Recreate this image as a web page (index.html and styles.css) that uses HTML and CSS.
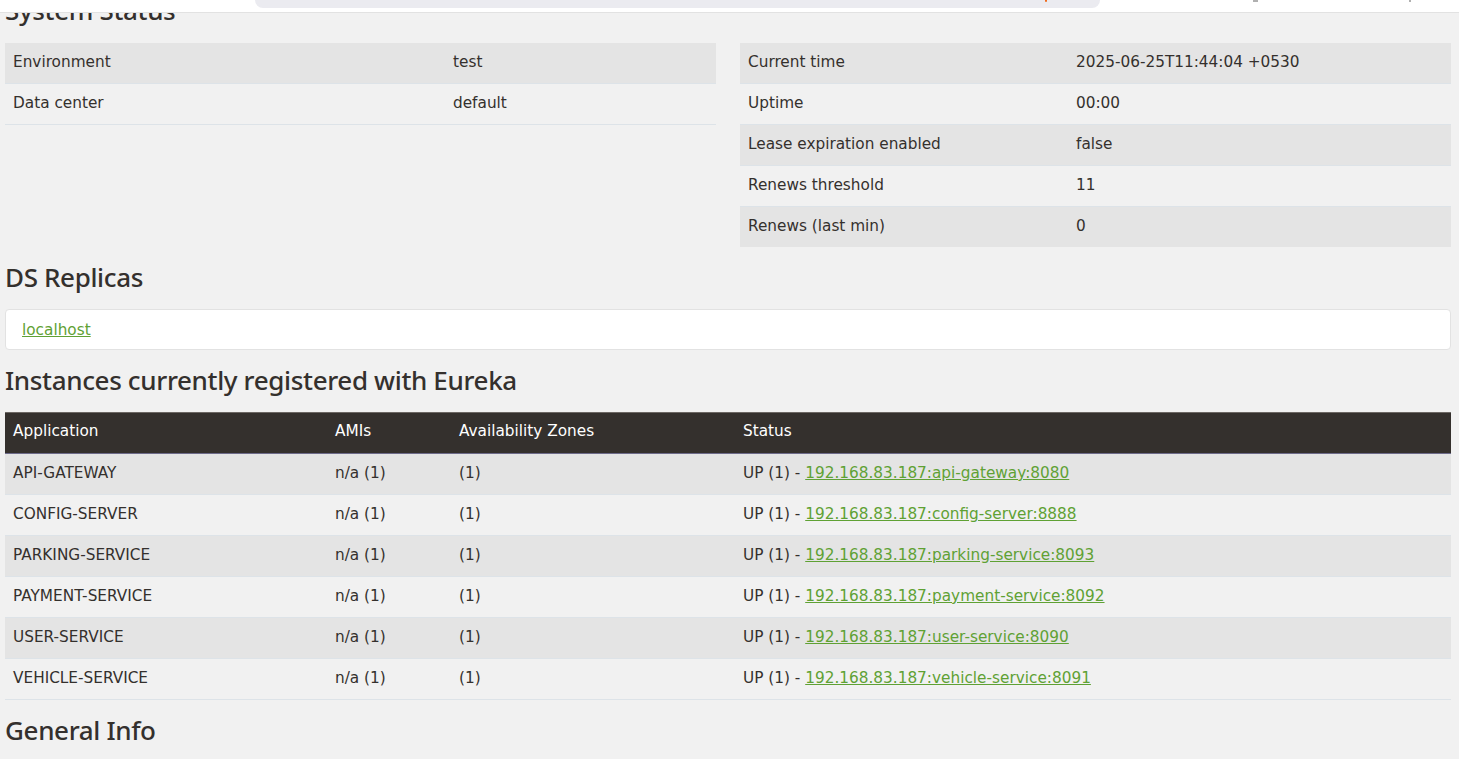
FILE: index.html
```html
<!DOCTYPE html>
<html>
<head>
<meta charset="utf-8">
<title>Eureka</title>
<link rel="stylesheet" href="styles.css">
</head>
<body>
<div class="topbar">
  <div class="pill"><span class="dot"></span></div>
  <span class="mark mark1"></span>
  <span class="mark mark2"></span>
</div>
<main class="page">
  <h2 class="heading first">System Status</h2>
  <div class="row">
    <div class="col">
      <table class="table table-left">
        <tr><td class="k">Environment</td><td>test</td></tr>
        <tr><td class="k">Data center</td><td>default</td></tr>
      </table>
    </div>
    <div class="col">
      <table class="table table-right">
        <tr><td class="k">Current time</td><td>2025-06-25T11:44:04 +0530</td></tr>
        <tr><td class="k">Uptime</td><td>00:00</td></tr>
        <tr><td class="k">Lease expiration enabled</td><td>false</td></tr>
        <tr><td class="k">Renews threshold</td><td>11</td></tr>
        <tr><td class="k">Renews (last min)</td><td>0</td></tr>
      </table>
    </div>
  </div>

  <h2 class="heading">DS Replicas</h2>
  <ul class="replicas">
    <li><a href="#">localhost</a></li>
  </ul>

  <h2 class="heading">Instances currently registered with Eureka</h2>
  <table class="table instances">
    <thead>
      <tr><th class="c1">Application</th><th class="c2">AMIs</th><th class="c3">Availability Zones</th><th>Status</th></tr>
    </thead>
    <tbody>
      <tr><td>API-GATEWAY</td><td>n/a (1)</td><td>(1)</td><td>UP (1) - <a href="#">192.168.83.187:api-gateway:8080</a></td></tr>
      <tr><td>CONFIG-SERVER</td><td>n/a (1)</td><td>(1)</td><td>UP (1) - <a href="#">192.168.83.187:config-server:8888</a></td></tr>
      <tr><td>PARKING-SERVICE</td><td>n/a (1)</td><td>(1)</td><td>UP (1) - <a href="#">192.168.83.187:parking-service:8093</a></td></tr>
      <tr><td>PAYMENT-SERVICE</td><td>n/a (1)</td><td>(1)</td><td>UP (1) - <a href="#">192.168.83.187:payment-service:8092</a></td></tr>
      <tr><td>USER-SERVICE</td><td>n/a (1)</td><td>(1)</td><td>UP (1) - <a href="#">192.168.83.187:user-service:8090</a></td></tr>
      <tr><td>VEHICLE-SERVICE</td><td>n/a (1)</td><td>(1)</td><td>UP (1) - <a href="#">192.168.83.187:vehicle-service:8091</a></td></tr>
    </tbody>
  </table>

  <h2 class="heading">General Info</h2>
</main>
</body>
</html>
```

FILE: styles.css
```css
* { box-sizing: border-box; }

html, body {
  margin: 0;
  padding: 0;
  background: #f1f1f1;
  color: #34302d;
  font-family: "DejaVu Sans", "Open Sans", sans-serif;
  font-size: 15.3px;
  line-height: 24px;
  overflow: hidden;
}

.topbar {
  position: relative;
  z-index: 2;
  height: 13px;
  background: #ffffff;
  border-bottom: 1px solid #e2e2e2;
}

.pill {
  position: absolute;
  left: 255px;
  top: 0;
  width: 845px;
  height: 8px;
  background: #ebebf0;
  border-radius: 0 0 8px 8px;
}

.dot {
  position: absolute;
  left: 790px;
  top: 0;
  width: 2px;
  height: 2px;
  background: #f06a1c;
  border-radius: 0 0 1px 1px;
}

.mark {
  position: absolute;
  top: 0;
  height: 2px;
  background: #b0b0b0;
}
.mark1 { left: 1253px; width: 5px; }
.mark2 { left: 1409px; width: 2px; }

.page {
  position: relative;
  z-index: 1;
  width: 1446px;
  margin-left: 5px;
}

.heading {
  margin: 0;
  padding: 12px 0 14px;
  font-family: "Noto Sans", "Open Sans", sans-serif;
  font-weight: 500;
  font-size: 26px;
  letter-spacing: -0.35px;
  line-height: 36px;
  color: #34302d;
}

.heading.first {
  margin-top: -33px;
}

.row {
  display: flex;
  gap: 24px;
}

.col {
  flex: 1 1 0;
  min-width: 0;
}

.table {
  width: 100%;
  border-collapse: collapse;
  border-spacing: 0;
}

.table td, .table th {
  padding: 7px 8px 9px;
  text-align: left;
  vertical-align: top;
  border-top: 1px solid #dde3e8;
  font-weight: 400;
}

.table tr:first-child td { border-top-color: #f1f1f1; }
.table tr:last-child td { border-bottom: 1px solid #dde3e8; }

.table tr:nth-child(odd) td { background: #e4e4e4; }

.table-left .k { width: 440px; }
.table-right .k { width: 328px; }
.table-right tr:last-child td { border-bottom: 0; }

.replicas {
  list-style: none;
  margin: 0;
  padding: 8px 16px 7px;
  background: #ffffff;
  border: 1px solid #e2e2e2;
  border-radius: 4px;
}

a {
  color: #5fa134;
  text-decoration: underline;
}

.instances thead th {
  background: #34302d;
  color: #ffffff;
  border-top: 1px solid #6c6763;
  border-bottom: 1px solid #6d6b8a;
  padding: 6px 8px 10px;
}
.instances .c1 { width: 322px; }
.instances .c2 { width: 124px; }
.instances .c3 { width: 284px; }
.instances tbody tr:first-child td { border-top: 0; }
```
